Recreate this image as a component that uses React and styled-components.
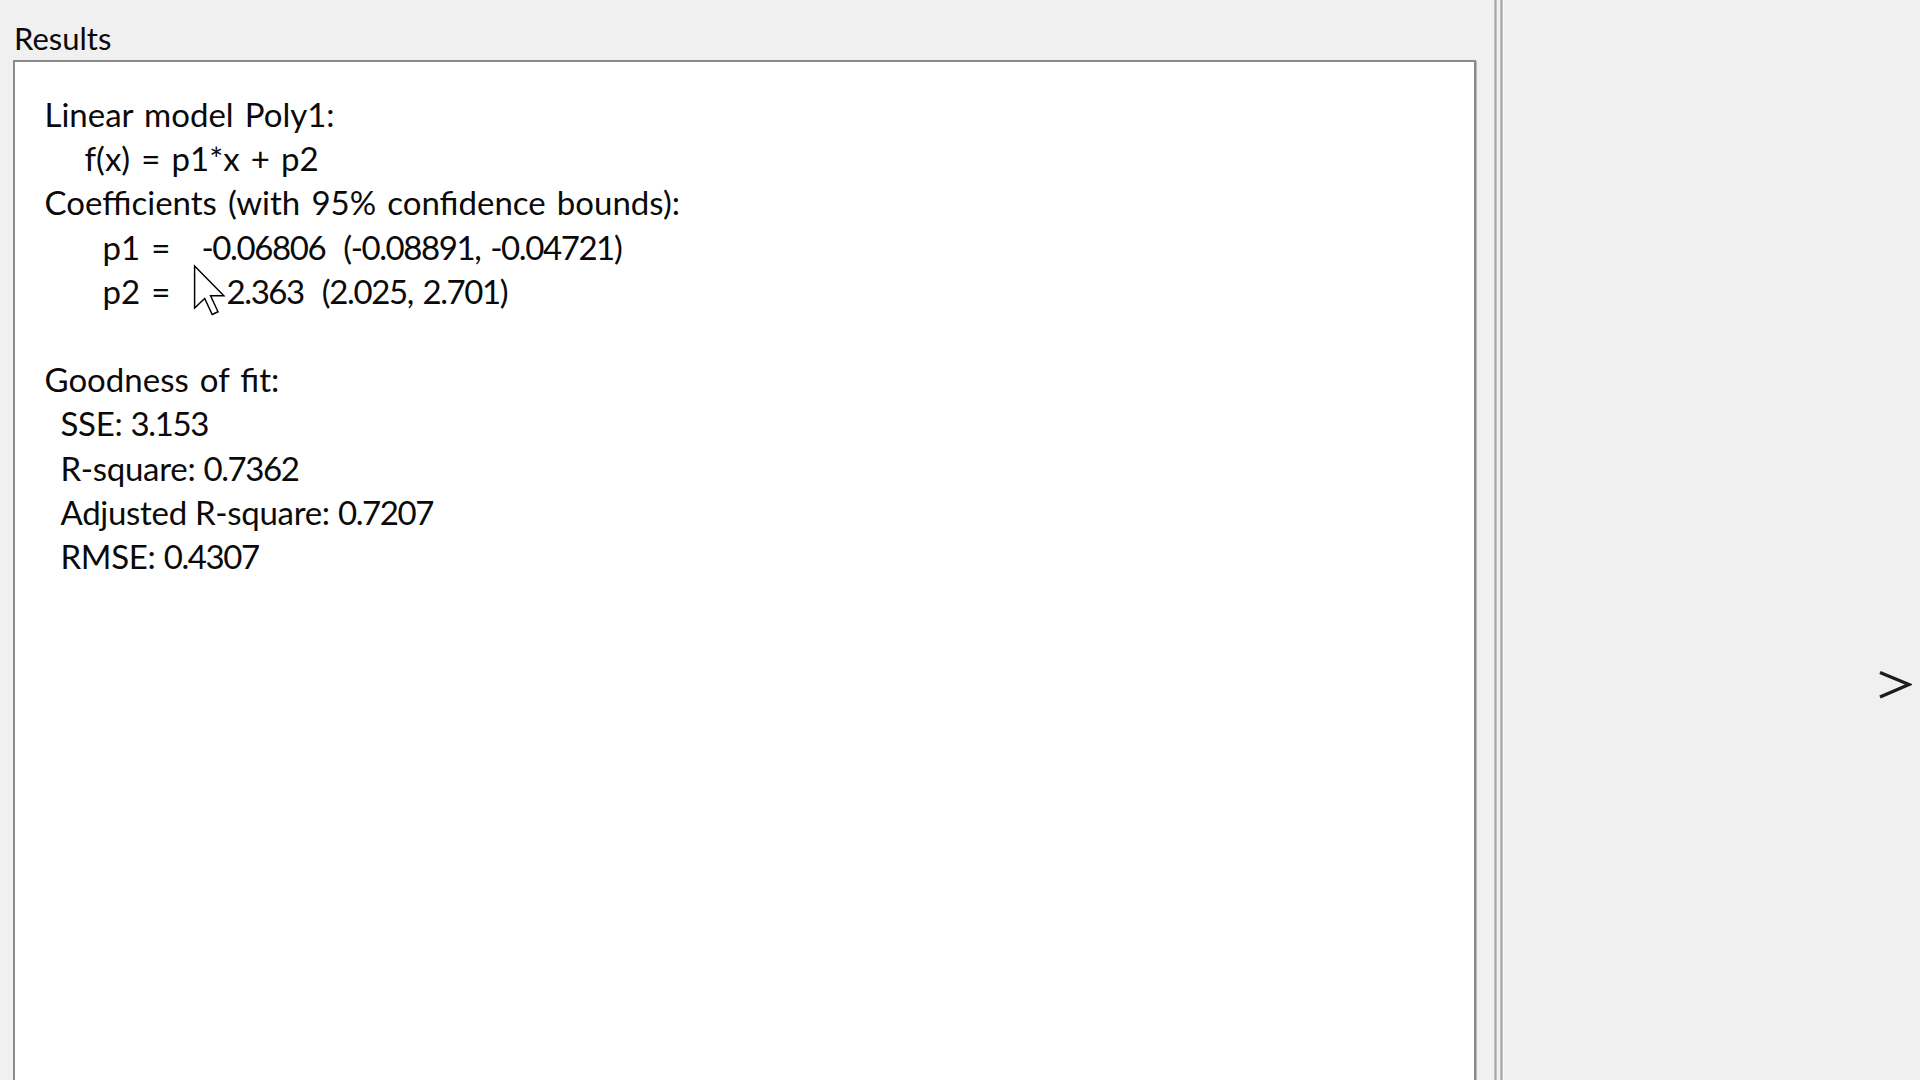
import styled, { createGlobalStyle } from "styled-components"

const GlobalStyle = createGlobalStyle`
    html, body {
        margin: 0;
        padding: 0;
        background: #f0f0f0;
        overflow: hidden;
    }
    body {
        font-family: Lato, "Open Sans", "Liberation Sans", sans-serif;
        color: #0a0a0a;
    }
`

const Window = styled.div`
    display: flex;
    width: 1920px;
    height: 1080px;
    overflow: hidden;
    background: #f0f0f0;
`

const ResultsPane = styled.div`
    width: 1494px;
    flex-shrink: 0;
    box-sizing: border-box;
    padding: 0 18px 0 13px;
    display: flex;
    flex-direction: column;
`

const PaneTitle = styled.div`
    height: 60px;
    box-sizing: border-box;
    padding: 23.5px 0 0 1px;
    font-size: 31px;
    line-height: 29px;
`

const ResultsBox = styled.div`
    flex: 1;
    margin-bottom: -40px;
    background: #ffffff;
    border: 2px solid #8a8a8a;
    box-shadow: 0 0 1px 0.5px #b8b8b8;
    padding: 30px 0 0 29.5px;
    font-size: 33px;
    line-height: 44.2px;
    word-spacing: 2.7px;
`

const Line = styled.div`
    height: 44.2px;
    padding-left: ${(p) => p.indent || 0}px;
    white-space: pre;
`

const StatRow = styled(Line)`
    word-spacing: 0;
    letter-spacing: -0.3px;
`

// digits in the original face are narrower than Lato's
const Num = styled.span`
    letter-spacing: -1.4px;
`

const CoefLabel = styled.span`
    display: inline-block;
    width: ${(p) => p.width}px;
`

const Interval = styled(Num)`
    margin-left: 18px;
`

const Splitter = styled.div`
    width: 9px;
    flex-shrink: 0;
    display: flex;
    gap: 3px;
`

const Rule = styled.div`
    width: 3px;
    height: 100%;
    background: linear-gradient(to right, #cfcfcf, #a6a6a6, #d2d2d2);
    box-shadow: ${(p) => (p.highlight ? "1px 0 0 #fbfbfb" : "none")};
`

const SidePane = styled.div`
    flex: 1;
    display: flex;
    justify-content: flex-end;
    align-items: flex-start;
    padding: 670px 8px 0 0;
`

const ExpandButton = styled.div`
    width: 34px;
    height: 30px;
    display: flex;
    align-items: center;
    justify-content: center;
`

const Cursor = styled.svg`
    position: absolute;
    left: 193px;
    top: 264px;
    pointer-events: none;
`

const CoefRow = ({ name, labelWidth, value, low, high }) => (
    <Line indent={58}>
        <CoefLabel width={labelWidth}>{name} =</CoefLabel>
        <Num>{value}</Num>
        <Interval>
            ({low}, {high})
        </Interval>
    </Line>
)

const StatLine = ({ label, value }) => (
    <StatRow indent={16}>
        {label}: <Num>{value}</Num>
    </StatRow>
)

const App = () => {
    return (
        <>
            <GlobalStyle />
            <Window>
                <ResultsPane>
                    <PaneTitle>Results</PaneTitle>
                    <ResultsBox>
                        <Line>Linear model Poly1:</Line>
                        <Line indent={40}>f(x) = p1*x + p2</Line>
                        <Line>Coefficients (with 95% confidence bounds):</Line>
                        <CoefRow
                            name="p1"
                            labelWidth={99}
                            value="-0.06806"
                            low="-0.08891"
                            high="-0.04721"
                        />
                        <CoefRow
                            name="p2"
                            labelWidth={124}
                            value="2.363"
                            low="2.025"
                            high="2.701"
                        />
                        <Line />
                        <Line>Goodness of fit:</Line>
                        <StatLine label="SSE" value="3.153" />
                        <StatLine label="R-square" value="0.7362" />
                        <StatLine label="Adjusted R-square" value="0.7207" />
                        <StatLine label="RMSE" value="0.4307" />
                    </ResultsBox>
                </ResultsPane>
                <Splitter>
                    <Rule />
                    <Rule highlight />
                </Splitter>
                <SidePane>
                    <ExpandButton>
                        <svg width="34" height="30" viewBox="0 0 34 30">
                            <path
                                d="M2 2.5 L31 14.5 L2 27"
                                fill="none"
                                stroke="#1c1c1c"
                                strokeWidth="3.4"
                                strokeLinejoin="miter"
                            />
                        </svg>
                    </ExpandButton>
                </SidePane>
            </Window>
            <Cursor width="33" height="53" viewBox="0 0 12.4 19.6">
                <path
                    d="M0.6 0.6 L0.6 16.4 L4.4 12.8 L7.2 18.8 L9.4 17.8 L6.6 11.8 L11.6 11.8 Z"
                    fill="#ffffff"
                    stroke="#000000"
                    strokeWidth="0.55"
                    strokeLinejoin="miter"
                />
            </Cursor>
        </>
    )
}

export default App
